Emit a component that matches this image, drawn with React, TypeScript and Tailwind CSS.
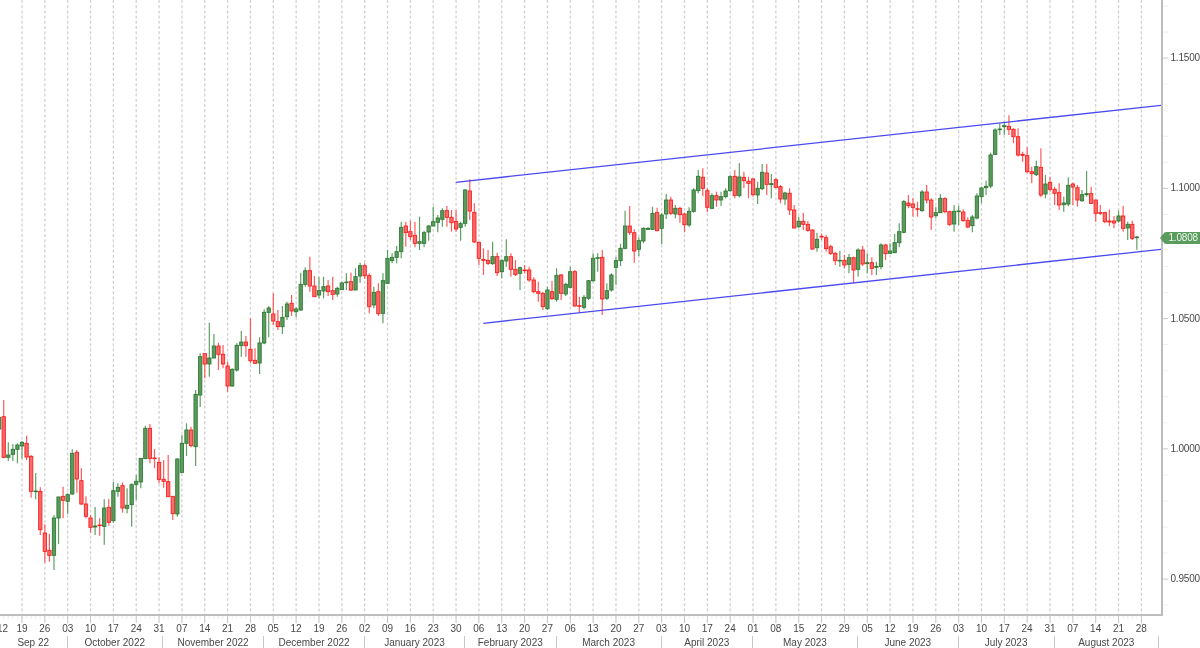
import React from "react";

type C = [string, number, number, number, number];

// each row: colour, wick top, body top, body bottom, wick bottom (3x crop coordinates)
const segs: { y0: number; start: number; rows: C[] }[] = [
  { y0: 380, start: -5, rows: [
    ["g",100,112,147,160],["r",60,110,232,235],["g",187,225,232,243],["g",192,208,223,243],["g",190,195,208,250],
    ["g",183,187,198,236],["r",167,190,231,240],["r",225,229,334,353],["g",279,333,335,358],["r",322,334,449,465],
    ["r",433,459,514,548],["r",462,511,526,545],["g",405,414,526,570],["g",350,351,414,492],["r",320,349,361,415],
    ["g",340,344,364,402],["g",208,220,342,345],["r",210,217,297,338],["r",265,302,372,375],["r",349,372,409,415],
    ["r",405,414,442,458],["g",381,438,441,465],["r",415,435,437,467],["g",358,384,439,494],["r",356,382,427,437],
    ["g",305,332,422,428],["g",310,322,334,350],["r",307,317,384,398],["g",325,376,385,400],["g",310,314,374,440],
    ["g",285,304,313,360],["g",234,235,306,325],["g",137,145,236,237],["r",132,145,235,250],["r",207,234,236,265],
    ["r",232,247,298,310],["r",240,298,304,323],["r",225,305,350,350],["r",348,349,401,420],["g",235,237,402,410],
    ["g",165,190,277,280],["g",130,150,190,228],["r",140,150,197,202],["g",30,43,200,258],
  ]},
  { y0: 230, start: 39, rows: [
    ["g",370,380,495,531],["r",370,371,402,445],["g",278,384,402,440],["g",312,348,384,385],["r",338,348,373,420],
    ["r",345,373,402,415],["r",395,408,468,485],["g",415,418,468,470],["g",340,346,420,425],["g",303,336,347,380],
    ["r",318,336,347,380],["r",265,358,392,400],["r",355,391,400,402],["g",322,339,399,432],["g",238,247,339,343],
    ["g",228,234,247,322],["r",190,252,273,285],["r",240,275,290,300],["g",228,262,290,312],["g",215,222,260,270],
    ["r",195,220,243,258],["g",232,237,245,262],["g",128,163,240,243],["g",112,122,163,170],["r",80,122,168,185],
    ["r",138,168,200,200],["g",142,182,195,205],["g",140,170,183,205],["r",150,168,185,198],["r",140,182,193,210],
    ["g",170,175,192,200],["g",155,159,179,180],["g",130,156,158,180],["r",128,155,180,183],["g",115,140,180,180],
    ["g",98,107,138,158],["r",100,107,137,147],["r",130,137,230,250],["g",170,187,225,235],["r",160,185,251,258],
    ["g",130,152,250,280],["g",60,85,160,160],["g",70,82,92,100],["g",48,65,82,100],
  ]},
  { y0: 170, start: 83, rows: [
    ["g",155,172,245,265],["r",155,168,188,230],["r",152,185,200,210],["r",155,196,220,232],["g",140,215,220,240],
    ["g",182,188,220,232],["g",165,168,186,212],["g",110,155,168,168],["g",135,144,157,187],["g",115,122,148,170],
    ["r",108,122,142,170],["r",120,142,158,185],["r",120,154,177,185],["g",155,161,172,212],["g",57,60,160,170],
    ["r",28,63,123,150],["r",100,127,216,218],["r",217,217,265,285],["r",235,268,271,315],["r",240,271,280,285],
    ["g",215,260,281,285],["r",248,260,308,318],["g",267,272,305,325],["g",208,260,273,290],["r",250,260,298,320],
    ["r",270,298,314,318],["g",290,293,310,360],["r",285,300,302,310],["r",290,300,330,335],["r",322,330,365,370],
    ["r",335,365,370,395],["r",365,370,410,420],["g",350,360,416,420],["r",333,365,386,390],["g",295,316,388,395],
    ["r",312,315,370,390],["g",338,343,372,378],["g",290,305,352,355],["r",300,305,408,410],["r",380,407,409,428],
    ["g",375,382,412,418],["g",330,332,385,390],["g",250,265,332,335],["g",250,263,265,305],["r",240,262,387,435],
    ["g",340,362,385,390],
  ]},
  { y0: 150, start: 129, rows: [
    ["g",370,375,420,425],["g",322,332,352,405],["g",282,295,332,348],["g",182,228,295,298],["r",168,228,247,255],
    ["r",238,248,303,338],["g",262,272,298,318],["g",232,235,273,280],["g",232,235,238,240],["g",170,190,238,240],
    ["r",173,188,242,244],["g",188,195,235,282],["g",132,150,192,207],["r",140,150,190,195],["g",165,175,192,205],
    ["r",170,175,194,218],["r",188,192,224,247],["g",172,184,225,230],["g",115,120,184,188],["g",60,79,122,130],
    ["r",55,82,115,138],["r",115,122,172,187],["g",130,137,175,178],["r",125,137,150,170],["g",125,140,150,168],
    ["g",115,123,140,145],["g",75,80,122,125],["r",60,79,136,145],["g",40,81,137,142],["r",65,82,92,115],
    ["r",80,94,100,145],["r",85,87,134,140],["g",95,115,135,162],["g",42,67,116,120],["r",42,69,103,135],
    ["g",72,101,104,145],["r",85,89,112,115],["r",105,110,147,160],["g",125,129,147,165],["r",115,130,180,195],
    ["r",165,180,234,235],["g",200,214,230,235],["r",188,214,223,240],["r",213,223,241,245],["r",238,240,297,300],
    ["g",248,268,293,305],["r",250,259,261,270],["r",255,263,296,305],
  ]},
  { y0: 110, start: 177, rows: [
    ["r",405,410,430,435],["r",425,430,452,465],["g",422,451,453,470],["r",435,451,465,475],["g",432,443,463,490],
    ["r",440,443,480,520],["g",415,420,478,500],["r",408,420,462,468],["g",430,458,461,490],["r",442,458,475,495],
    ["g",455,469,472,495],["g",400,405,470,478],["r",402,405,431,450],["g",400,423,430,432],["g",372,398,428,430],
    ["g",340,365,398,412],["g",270,275,367,370],["r",255,279,287,295],["r",265,282,292,320],["r",275,296,298,320],
    ["g",240,246,302,305],["r",225,246,270,280],["r",265,270,321,360],["g",290,308,317,325],["g",252,265,308,310],
    ["r",262,266,305,310],["r",302,305,343,348],["g",285,304,342,365],["g",287,303,305,345],["r",298,306,332,335],
    ["r",322,331,351,355],["g",315,321,347,367],["g",250,258,324,328],["g",230,234,260,280],["g",212,229,233,255],
    ["g",128,135,228,235],["g",55,60,133,135],["g",40,57,59,75],["g",35,47,50,75],["r",16,49,58,75],
    ["r",55,58,80,100],["r",55,80,135,140],["r",125,133,136,155],["r",112,137,185,190],["r",170,185,191,220],
    ["g",152,170,194,198],
  ]},
  { y0: 90, start: 223, rows: [
    ["r",175,232,315,322],["g",255,282,312,325],["r",260,277,298,305],["r",290,298,310,345],["r",280,308,345,360],
    ["g",320,339,344,365],["g",262,286,342,348],["r",278,282,291,345],["r",285,293,330,350],["g",300,314,332,336],
    ["g",243,311,314,320],["r",290,311,340,342],["r",330,330,370,395],["r",345,368,370,375],["r",365,368,395,400],
    ["r",358,393,396,408],["r",378,393,399,415],["g",362,378,393,398],["r",348,378,415,425],["g",395,403,414,450],
    ["r",392,403,445,450],["g",437,441,443,479],
  ]},
];

const STEP = 4.569;
const candleX = (i: number) => 22 + STEP * i;
const WEEK = 22.845;

const candles = segs.flatMap((s) =>
  s.rows.map((r, k) => ({
    x: candleX(s.start + k),
    up: r[0] === "g",
    wt: s.y0 + r[1] / 3,
    bt: s.y0 + r[2] / 3,
    bb: s.y0 + r[3] / 3,
    wb: s.y0 + r[4] / 3,
  }))
);

const gridXs = Array.from({ length: 50 }, (_, k) => 22 + WEEK * k);

const weeks = "19 26 03 10 17 24 31 07 14 21 28 05 12 19 26 02 09 16 23 30 06 13 20 27 06 13 20 27 03 10 17 24 01 08 15 22 29 05 12 19 26 03 10 17 24 31 07 14 21 28".split(" ");

const months: [string, number][] = [
  ["Sep 22", 67.5],
  ["October 2022", 163],
  ["November 2022", 264],
  ["December 2022", 365],
  ["January 2023", 465],
  ["February 2023", 556.5],
  ["March 2023", 661.6],
  ["April 2023", 753],
  ["May 2023", 858],
  ["June 2023", 958.6],
  ["July 2023", 1054.6],
  ["August 2023", 1159],
];

const prices = ["1.1500", "1.1000", "1.0500", "1.0000", "0.9500"];

function Plot() {
  return (
    <svg width={1161} height={614} className="block">
      {gridXs.map((x) => (
        <line key={x} x1={x} x2={x} y1={0} y2={614} stroke="#d2d2d2" strokeWidth={1.3} strokeDasharray="3 2.2" />
      ))}
      {candles.map((c, i) => (
        <g key={i}>
          <line
            x1={c.x}
            x2={c.x}
            y1={c.wt}
            y2={c.wb}
            stroke={c.up ? "#5f9f62" : "#ff5a5a"}
            strokeWidth={1.2}
          />
          <rect
            x={c.x - 1.65}
            y={c.bt}
            width={3.3}
            height={Math.max(c.bb - c.bt, 0.6)}
            fill={c.up ? "#5c9a5e" : "#ff6a6a"}
            stroke={c.up ? "#2f7a35" : "#f72020"}
            strokeWidth={0.9}
          />
        </g>
      ))}
      <line x1={455.7} y1={182.3} x2={1161} y2={105.3} stroke="#4a4af0" strokeWidth={1.3} />
      <line x1={483.3} y1={323.3} x2={1161} y2={249.3} stroke="#4a4af0" strokeWidth={1.3} />
    </svg>
  );
}

function PriceAxis() {
  const minor = Array.from({ length: 24 }, (_, k) => 6 + 26.05 * k);
  return (
    <div className="relative flex-1 pt-[52px] tracking-[-0.2px]">
      <svg width={8} height={616} className="absolute left-0 top-0 block">
        {minor.map((y, k) => (
          <line
            key={k}
            x1={0}
            x2={5}
            y1={y}
            y2={y}
            stroke={k % 5 === 2 ? "#c8c8c8" : "#efefef"}
            strokeWidth={1}
          />
        ))}
      </svg>
      {prices.map((p) => (
        <div key={p} className="h-[130.25px] pl-[7.5px] leading-[12px]">
          {p}
        </div>
      ))}
      <div className="absolute left-[-3px] top-[232px] flex h-[12px] items-center">
        <div className="h-0 w-0 border-y-[6px] border-r-[5px] border-y-transparent border-r-[#5a9c5e]" />
        <div className="flex h-[12px] w-[35px] items-center rounded-l-[1px] bg-[#5a9c5e] pl-[3.5px] leading-[12px] text-[#f0f8f0]">
          1.0808
        </div>
      </div>
    </div>
  );
}

function TickRow() {
  return (
    <svg width={1163} height={7} className="block">
      {candles.map((c, i) => (
        <line key={i} x1={c.x} x2={c.x} y1={0} y2={3} stroke="#eeeeee" strokeWidth={1} />
      ))}
      {gridXs.map((x) => (
        <line key={x} x1={x} x2={x} y1={0} y2={7} stroke="#c4c4c4" strokeWidth={1} />
      ))}
    </svg>
  );
}

export default function App() {
  return (
    <div className="h-[648px] w-[1200px] overflow-hidden bg-white text-[10px] text-[#484848] blur-[0.3px] [font-family:'Liberation_Sans',Arial,sans-serif]">
      <div className="flex h-[616px]">
        <div className="h-[616px] w-[1163px] shrink-0 border-b-2 border-r-2 border-[#bdbdbd]">
          <Plot />
        </div>
        <PriceAxis />
      </div>
      <TickRow />
      <div className="ml-[-5.58px] flex h-[13px] leading-[12px]">
        <div className="w-[16.16px] shrink-0 text-center">12</div>
        {weeks.map((w, i) => (
          <div key={i} className="w-[22.845px] shrink-0 text-center">
            {w}
          </div>
        ))}
      </div>
      <div className="flex h-[12px] leading-[13px]">
        {months.map(([name, end], i) => {
          const start = i === 0 ? 0 : months[i - 1][1];
          return (
            <div
              key={name}
              className="shrink-0 border-r border-[#c8c8c8] text-center"
              style={{ width: end - start }}
            >
              {name}
            </div>
          );
        })}
      </div>
    </div>
  );
}
